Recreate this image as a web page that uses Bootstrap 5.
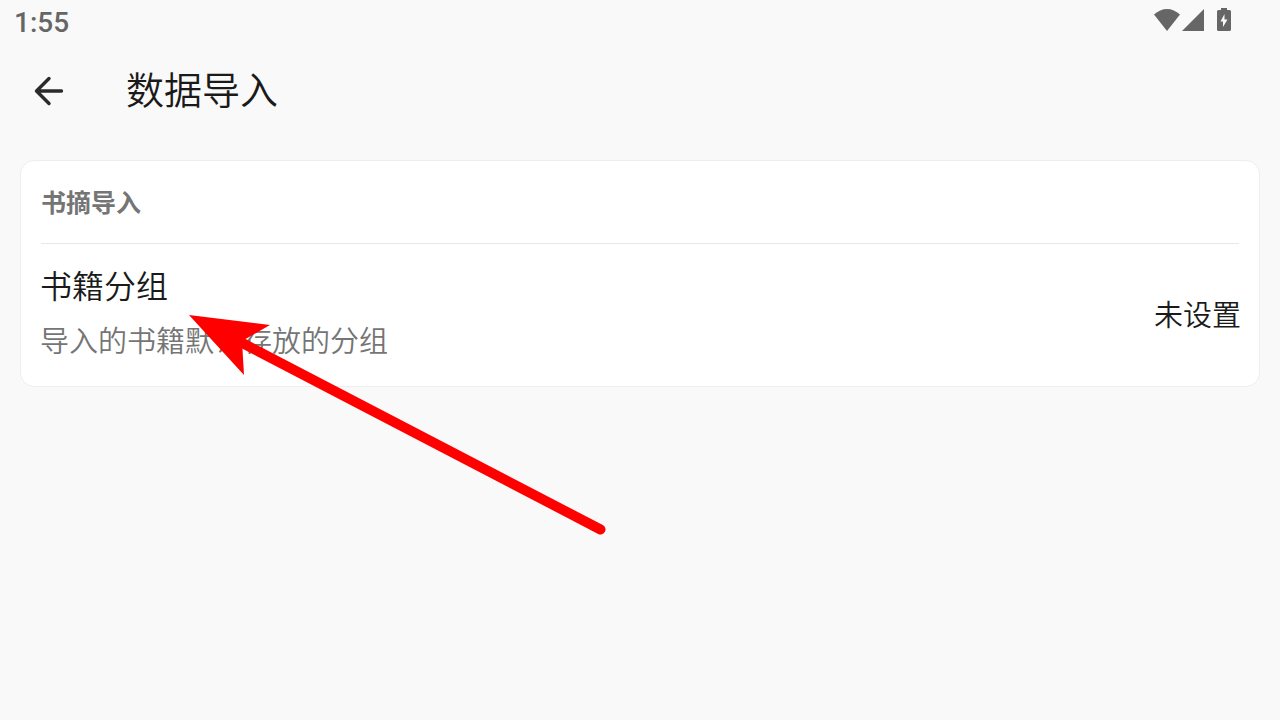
<!DOCTYPE html>
<html lang="zh-CN">
<head>
<meta charset="utf-8">
<meta name="viewport" content="width=device-width, initial-scale=1">
<title>数据导入</title>
<link href="https://cdn.jsdelivr.net/npm/bootstrap@5.3.0/dist/css/bootstrap.min.css" rel="stylesheet">
<style>
  body { background: #f9f9f9; color: #1a1a1a; font-family: "Noto Sans CJK SC", sans-serif; }
  .status-bar { height: 44px; padding: 0 48px 0 14px; color: #666; }
  .clock { font: 500 28px/46px Roboto, sans-serif; }
  .status-icons { height: 40px; }
  .app-bar { height: 92px; padding: 0 28px; gap: 56px; }
  .back-btn { width: 42px; height: 42px; color: #2b2b2b; }
  .page-title { padding-bottom: 4px; font-size: 38px; line-height: 56px; font-weight: 350; }
  .settings { margin: 24px 20px; border: 1px solid #eee; border-radius: 14px; }
  .section-title { height: 83px; margin: 0 20px; border-bottom: 1px solid #e8e8e8; color: #757575; font-size: 25px; line-height: 80px; font-weight: 700; }
  .setting-row { padding: 20px 18px 28px 19px; color: inherit; font-weight: 350; }
  .setting-name { font-size: 32px; line-height: 40px; }
  .setting-note { margin-top: 16px; font-size: 29px; line-height: 38px; color: #757575; }
  .setting-value { padding-top: 4px; font-size: 29px; line-height: 40px; }
  .pointer-arrow { position: absolute; left: 168px; top: 152px; pointer-events: none; }
</style>
</head>
<body class="min-vh-100">
<header>
  <div class="status-bar d-flex justify-content-between align-items-start">
    <time class="clock" datetime="13:55">1:55</time>
    <div class="status-icons d-flex align-items-center">
      <svg width="78" height="24" viewBox="0 0 78 24" fill="#666" role="img" aria-label="Wi-Fi、信号、充电中">
        <path d="M0 6.5C8-1 18-1 26 6.5L13 23Z"/>
        <path d="M50 1V23H28Z"/>
        <path fill-rule="evenodd" d="M67 0h6v2h2.500q1.500 0 1.500 1.500v18q0 1.500-1.500 1.500h-11q-1.500 0-1.500-1.500v-18Q63 2 64.500 2H67ZM70.500 6L66.500 13.500H69V19L73.500 11.500H70.500Z"/>
      </svg>
    </div>
  </div>
  <nav class="app-bar d-flex align-items-center" aria-label="导航">
    <button type="button" class="back-btn btn p-0 border-0 d-flex" aria-label="返回">
      <svg width="42" height="42" viewBox="0 0 42 42" fill="none" stroke="currentColor" stroke-width="3.400" stroke-linecap="round" stroke-linejoin="round"><path d="M33.500 22H9M21 9.500L8.500 22L21 34.500"/></svg>
    </button>
    <h1 class="page-title mb-0">数据导入</h1>
  </nav>
</header>
<main>
  <section class="settings bg-white position-relative">
    <h2 class="section-title">书摘导入</h2>
    <button type="button" class="setting-row btn w-100 border-0 rounded-0 d-flex align-items-center justify-content-between text-start">
      <span class="d-flex flex-column">
        <span class="setting-name">书籍分组</span>
        <span class="setting-note">导入的书籍默认存放的分组</span>
      </span>
      <span class="setting-value">未设置</span>
    </button>
    <svg class="pointer-arrow" width="420" height="226" viewBox="0 0 420 226" aria-hidden="true">
      <path d="M40 23L411.500 216.500" stroke="#f00" stroke-width="10" stroke-linecap="round"/>
      <path d="M0 2L81 12L53 28L55 62Z" fill="#f00"/>
    </svg>
  </section>
</main>
<script src="https://cdn.jsdelivr.net/npm/bootstrap@5.3.0/dist/js/bootstrap.bundle.min.js"></script>
</body>
</html>
